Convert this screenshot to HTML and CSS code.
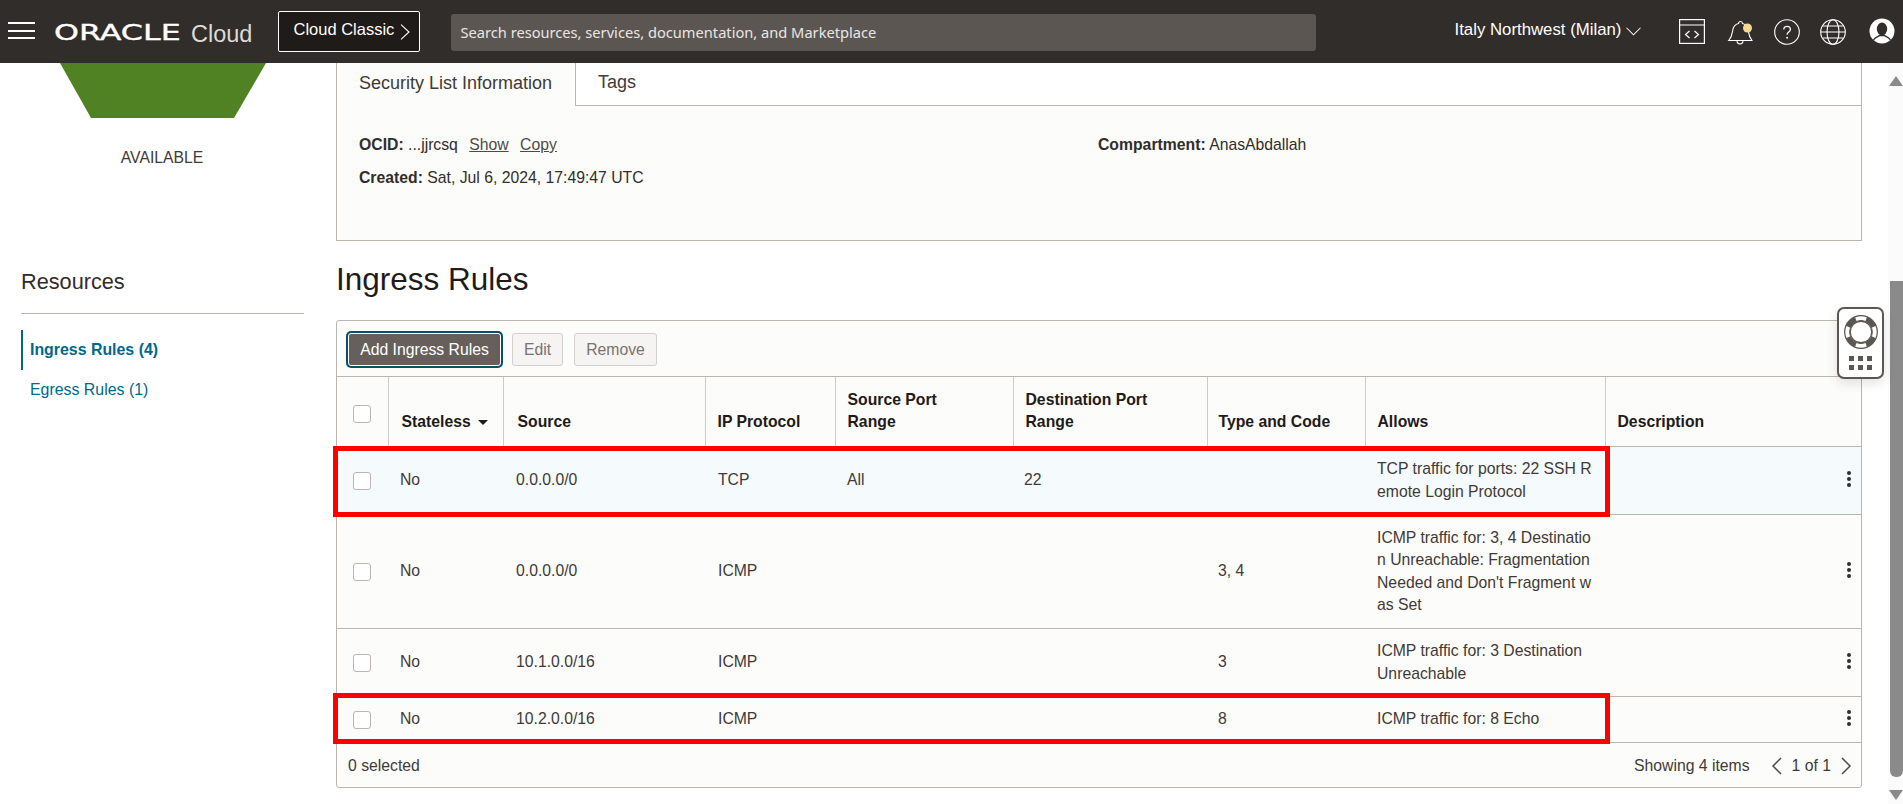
FILE: index.html
```html
<!DOCTYPE html>
<html lang="en">
<head>
<meta charset="utf-8">
<title>Security List - Ingress Rules</title>
<link rel="stylesheet" href="styles.css">
</head>
<body>
<header class="topbar">
  <button class="burger" aria-label="Menu"><span></span><span></span><span></span></button>
  <div class="brand"><span class="brand-oracle">ORACLE</span><span class="brand-cloud">Cloud</span></div>
  <button class="classic"><span class="classic-label">Cloud Classic</span>
    <svg class="classic-chev" viewBox="0 0 10 16" width="10" height="16"><path d="M1 .7l8 7.300-8 7.300" fill="none" stroke="#fff" stroke-width="1.100"/></svg>
  </button>
  <div class="search">Search resources, services, documentation, and Marketplace</div>
  <div class="region">Italy Northwest (Milan)
    <svg viewBox="0 0 16 9" width="15" height="9"><path d="M.5.5L8 8 15.500.5" fill="none" stroke="#fff" stroke-width="1.100"/></svg>
  </div>
  <div class="tools">
    <svg class="tool-code" viewBox="0 0 26 25" width="26" height="25" fill="none" stroke="#fff" stroke-width="1.200"><rect x=".6" y=".6" width="24.800" height="23.800"/><path d="M.6 6h24.800M10.500 12l-4 3.500 4 3.500M15.500 12l4 3.500-4 3.500"/></svg>
    <svg class="tool-bell" viewBox="0 0 26 26" width="26" height="26" fill="none" stroke="#fff" stroke-width="1.100"><path d="M1.700 21.500c3.300-3.800 3.500-6.500 4-10 .5-3.700 2.800-6.300 5.800-7 .1-2.700 3.900-2.700 4 0 2.900.7 5.200 3.300 5.700 7 .5 3.500.8 6.200 3.800 10z"/><path d="M10 21.500c0 4.500 6 4.500 6 0"/><circle cx="20.500" cy="9" r="4.500" fill="#f6d98e" stroke="none"/></svg>
    <svg class="tool-help" viewBox="0 0 26 26" width="26" height="26" fill="none" stroke="#fff" stroke-width="1.100"><circle cx="13" cy="13" r="12.300"/><path d="M9.800 10.500c0-4.300 6.600-4.300 6.600 0 0 2.600-3.300 2.600-3.300 5.200" stroke-width="1.300"/><circle cx="13.100" cy="18.800" r="1" fill="#fff" stroke="none"/></svg>
    <svg class="tool-globe" viewBox="0 0 26 26" width="26" height="26" fill="none" stroke="#fff" stroke-width="1.100"><circle cx="13" cy="13" r="12.300"/><ellipse cx="13" cy="13" rx="6" ry="12.300"/><path d="M.7 13h24.600M2.800 7h20.400M2.800 19h20.400"/></svg>
    <svg class="tool-user" viewBox="0 0 26 26" width="26" height="26"><circle cx="13" cy="13" r="12.500" fill="#fff"/><ellipse cx="13" cy="11" rx="5.200" ry="6.400" fill="#312d2a"/><path d="M4.500 22c2-3.500 5-3.500 6-4.500h5c1 1 4 1 6 4.500" fill="none" stroke="#312d2a" stroke-width="1.400"/></svg>
  </div>
</header>

<main class="page">
  <aside class="side">
    <svg class="sl-shape" viewBox="0 0 206 55" width="206" height="55"><polygon points="0,0 206,0 174,55 31,55" fill="#508223"/></svg>
    <div class="status">AVAILABLE</div>
    <h2 class="res-title">Resources</h2>
    <nav class="res-nav">
      <a class="res-link res-active">Ingress Rules (4)</a>
      <a class="res-link">Egress Rules (1)</a>
    </nav>
  </aside>

  <section class="content">
    <div class="info">
      <div class="tabs">
        <div class="tab tab-on">Security List Information</div>
        <div class="tab tab-off">Tags</div>
        <div class="tab-fill"></div>
      </div>
      <div class="info-body">
        <div class="info-col">
          <p class="info-line"><b>OCID:</b> ...jjrcsq <a class="lnk">Show</a> <a class="lnk">Copy</a></p>
          <p class="info-line"><b>Created:</b> Sat, Jul 6, 2024, 17:49:47 UTC</p>
        </div>
        <div class="info-col">
          <p class="info-line"><b>Compartment:</b> AnasAbdallah</p>
        </div>
      </div>
    </div>

    <h1 class="title">Ingress Rules</h1>

    <div class="card">
      <div class="toolbar">
        <button class="btn btn-primary">Add Ingress Rules</button>
        <button class="btn btn-off">Edit</button>
        <button class="btn btn-off">Remove</button>
      </div>
      <table class="grid">
        <colgroup>
          <col class="c-check"><col class="c-state"><col class="c-src"><col class="c-proto"><col class="c-sport"><col class="c-dport"><col class="c-type"><col class="c-allow"><col class="c-desc">
        </colgroup>
        <thead>
          <tr>
            <th class="th-check"><span class="box box-head"></span></th>
            <th>Stateless <span class="sort"></span></th>
            <th>Source</th>
            <th>IP Protocol</th>
            <th class="th-wrap">Source Port Range</th>
            <th class="th-wrap">Destination Port Range</th>
            <th>Type and Code</th>
            <th>Allows</th>
            <th>Description</th>
          </tr>
        </thead>
        <tbody>
          <tr class="r1 row-hi">
            <td class="td-check"><span class="box"></span></td><td>No</td><td>0.0.0.0/0</td><td>TCP</td><td>All</td><td>22</td><td></td>
            <td class="allows">TCP traffic for ports: 22 SSH Remote Login Protocol</td>
            <td class="kebab-cell"><span class="kebab"><i></i><i></i><i></i></span></td>
          </tr>
          <tr class="r2">
            <td class="td-check"><span class="box"></span></td><td>No</td><td>0.0.0.0/0</td><td>ICMP</td><td></td><td></td><td>3, 4</td>
            <td class="allows">ICMP traffic for: 3, 4 Destination Unreachable: Fragmentation Needed and Don't Fragment was Set</td>
            <td class="kebab-cell"><span class="kebab"><i></i><i></i><i></i></span></td>
          </tr>
          <tr class="r3">
            <td class="td-check"><span class="box"></span></td><td>No</td><td>10.1.0.0/16</td><td>ICMP</td><td></td><td></td><td>3</td>
            <td class="allows">ICMP traffic for: 3 Destination Unreachable</td>
            <td class="kebab-cell"><span class="kebab"><i></i><i></i><i></i></span></td>
          </tr>
          <tr class="r4">
            <td class="td-check"><span class="box"></span></td><td>No</td><td>10.2.0.0/16</td><td>ICMP</td><td></td><td></td><td>8</td>
            <td class="allows">ICMP traffic for: 8 Echo</td>
            <td class="kebab-cell"><span class="kebab"><i></i><i></i><i></i></span></td>
          </tr>
        </tbody>
      </table>
      <div class="foot">
        <span>0 selected</span>
        <div class="pager">
          <span class="pager-count">Showing 4 items</span>
          <svg viewBox="0 0 11 18" width="11" height="18"><path d="M10 1L2 9l8 8" fill="none" stroke="#4f4a46" stroke-width="1.500"/></svg>
          <span>1 of 1</span>
          <svg viewBox="0 0 11 18" width="11" height="18"><path d="M1 1l8 8-8 8" fill="none" stroke="#4f4a46" stroke-width="1.500"/></svg>
        </div>
      </div>
    </div>
  </section>

  <div class="scrollbar">
    <span class="sb-up"></span>
    <span class="sb-thumb"></span>
    <span class="sb-down"></span>
  </div>

  <div class="mark mark-a"></div>
  <div class="mark mark-b"></div>

  <div class="helper">
    <svg viewBox="0 0 36 36" width="34" height="34"><circle cx="18" cy="18" r="14.500" fill="none" stroke="#5b5652" stroke-width="5.500"/><circle cx="18" cy="18" r="17.300" fill="none" stroke="#5b5652" stroke-width="1.200"/><circle cx="18" cy="18" r="11.300" fill="none" stroke="#5b5652" stroke-width="1.200"/><path d="M12.500 4.500a14.500 14.500 0 0 1 11 0M31.500 12.500a14.500 14.500 0 0 1 0 11M23.500 31.500a14.500 14.500 0 0 1-11 0M4.500 23.500a14.500 14.500 0 0 1 0-11" fill="none" stroke-width="4" stroke="#fcfcfb"/></svg>
    <div class="dots"><i></i><i></i><i></i><i></i><i></i><i></i></div>
  </div>
</main>
</body>
</html>
```
FILE: styles.css
```css
* { box-sizing: border-box; }
html, body { margin: 0; height: 804px; overflow: hidden; }
body { background: #fff; color: #312d2a; font-family: "Liberation Sans", Arial, sans-serif; font-size: 15.75px; }

/* top bar */
.topbar { height: 63px; background: #312d2a; color: #fff; display: flex; align-items: center; }
.burger { width: 27px; height: 17px; margin-left: 8px; padding: 0; background: none; border: 0; display: flex; flex-direction: column; justify-content: space-between; margin-top: -2px; }
.burger span { display: block; height: 2px; background: #fff; }
.brand { display: flex; align-items: center; margin-left: 19px; width: 223.500px; }
.brand-oracle { display: block; flex: none; width: 137px; font-family: "DejaVu Sans", sans-serif; font-size: 21px; font-weight: 400; -webkit-text-stroke: .35px #fff; transform: scaleX(1.510); transform-origin: left center; margin-top: 3px; }
.brand-cloud { font-family: "Liberation Sans", sans-serif; font-size: 23.500px; color: #dedbd8; margin-top: 5px; }
.classic { height: 41px; width: 142px; margin-top: -1px; background: #1f1b18; color: #fff; border: 1px solid #fff; border-radius: 2px; padding: 0 0 0 15px; display: flex; align-items: center; gap: 6px; font: 16.5px "Liberation Sans", sans-serif; }
.classic-label { margin-top: -3px; }
.classic-chev { margin-top: 1px; }
.search { width: 865px; height: 37px; margin-left: 31px; margin-top: 1px; background: #5c5652; border-radius: 3px; padding-left: 10px; display: flex; align-items: center; color: #e8e6e4; font: 14.650px "Noto Sans", sans-serif; }
.region { margin-left: 139px; display: flex; align-items: center; gap: 5px; font-size: 16.800px; margin-top: -4px; }
.region svg { margin-top: 4px; }
.tools { margin-left: auto; padding-right: 8px; display: flex; align-items: center; }
.tools svg { display: block; flex: none; }
.tool-bell { margin-left: 22px; }
.tool-help { margin-left: 21px; }
.tool-globe { margin-left: 20px; }
.tool-user { margin-left: 23px; margin-top: -1px; }

/* page */
.page { position: relative; display: flex; height: 741px; }
.side { width: 336px; flex: none; padding-left: 21px; }
.sl-shape { display: block; margin-left: 39px; }
.status { width: 282px; text-align: center; margin-top: 31px; height: 18px; line-height: 18px; font-size: 15.75px; color: #3f3a36; }
.res-title { margin: 102px 0 0; padding-bottom: 18px; width: 283px; border-bottom: 1px solid #bcb6b1; font-size: 21.700px; font-weight: 400; line-height: 26px; }
.res-nav { margin-top: 16px; display: flex; flex-direction: column; gap: 0; }
.res-link { display: block; height: 40px; line-height: 40px; padding-left: 7px; color: #00688c; font-size: 15.900px; border-left: 2px solid transparent; }
.res-active { font-weight: 700; border-left-color: #00688c; }

.content { width: 1552px; flex: none; padding-right: 26px; }
.info { height: 178px; border: 1px solid #bcb6b1; border-top: 0; background: #fcfcfb; }
.tabs { display: flex; height: 43px; }
.tab { display: flex; align-items: center; font-size: 18px; color: #3f3a36; height: 43px; padding-bottom: 3px; }
.tab-on { width: 239px; padding-left: 22px; border-right: 1px solid #bcb6b1; }
.tab-off { width: 62px; padding-left: 22px; background: #fff; border-bottom: 1px solid #bcb6b1; flex: none; }
.tab-fill { flex: 1; background: #fff; border-bottom: 1px solid #bcb6b1; }
.info-body { display: flex; padding: 28px 22px 0; }
.info-col { width: 739px; }
.info-line { margin: 0 0 10.500px; line-height: 22.400px; }
.info-line b { color: #312d2a; }
.lnk { text-decoration: underline; margin-left: 7px; color: #4f4a46; }

.title { margin: 0; height: 79px; padding-top: 19px; font-size: 31.500px; line-height: 38px; font-weight: 400; color: #1f1b18; }

.card { height: 468px; border: 1px solid #bcb6b1; border-radius: 3px; background: #fcfcfb; display: flex; flex-direction: column; }
.toolbar { height: 56px; flex: none; display: flex; align-items: center; gap: 9px; padding: 2px 0 0 10px; border-bottom: 1px solid #bcb6b1; }
.btn { height: 33px; padding: 0 11px; border-radius: 3px; font: 15.75px "Liberation Sans", sans-serif; }
.btn-primary { width: 153px; margin: 0 2px 0 1px; padding: 0; background: #665f5b; color: #fff; border: 1px solid #fff; box-shadow: 0 0 0 2px #04536a; }
.btn-off { background: #f5f4f2; border: 1px solid #d3cfcb; color: #7a736e; margin-right: 2px; }

.grid { width: 100%; table-layout: fixed; border-collapse: collapse; flex: none; }
.c-check { width: 51px; }
.c-state { width: 115px; }
.c-src { width: 202px; }
.c-proto { width: 130px; }
.c-sport { width: 178px; }
.c-dport { width: 194px; }
.c-type { width: 158px; }
.c-allow { width: 240px; }
.grid th { height: 69px; padding: 0 12px 12px; text-align: left; vertical-align: bottom; font-size: 15.75px; line-height: 22.400px; color: #1f1b18; border-left: 1px solid #cfcbc7; border-bottom: 1px solid #bcb6b1; }
.grid th:first-child { border-left: 0; }
.grid th.th-wrap { padding-right: 50px; }
.grid th:nth-child(2) { padding-left: 13px; }
.grid th:nth-child(3) { padding-left: 14px; }
.grid th:nth-child(7) { padding-left: 11px; }
.grid td { padding: 1px 12px 0; vertical-align: middle; font-size: 15.75px; line-height: 22.400px; color: #3f3a36; border-bottom: 1px solid #bcb6b1; }
.grid td:nth-child(3) { padding-left: 13px; }
.grid td:nth-child(4) { padding-left: 13px; }
.grid td:nth-child(6) { padding-left: 11px; }
.grid td:nth-child(7) { padding-left: 11px; }
.grid th.th-check { padding: 0 0 23px 11px; }
.grid td.td-check { padding: 0 0 2px 11px; }
.r1 td { height: 68px; }
.r2 td { height: 114px; }
.r3 td { height: 68px; }
.r4 td { height: 46px; }
.row-hi td { background: #f5fafd; }
.allows { word-break: break-all; }
.box { display: block; width: 18px; height: 18px; margin: 3px 0 0 5px; background: #fff; border: 1px solid #bcb6b1; border-radius: 3px; }
.box-head { margin: 0 0 0 5px; }
.sort { display: inline-block; width: 0; height: 0; margin: 0 0 2px 3px; border: 5px solid transparent; border-top: 5px solid #1f1b18; border-bottom: 0; }
.grid td.kebab-cell { text-align: right; padding: 0 10px 3px 0; }
.kebab { display: inline-flex; flex-direction: column; gap: 2.300px; vertical-align: middle; }
.kebab i { display: block; width: 4px; height: 4px; border-radius: 50%; background: #312d2a; }

.foot { flex: 1; display: flex; justify-content: space-between; align-items: center; padding: 2px 9px 0 11px; font-size: 15.75px; color: #3f3a36; }
.pager { display: flex; align-items: center; gap: 10px; }
.pager-count { margin-right: 11px; }

/* fake browser scrollbar */
.scrollbar { width: 15px; flex: none; background: #fbfbfb; position: relative; display: flex; flex-direction: column; align-items: center; }
.sb-up { width: 0; height: 0; margin-top: 13px; border: 7.500px solid transparent; border-top: 0; border-bottom: 10px solid #8a8a8a; }
.sb-thumb { width: 13px; height: 496px; margin: 195px 0 0 2px; background: #8a8a8a; border-radius: 0 0 6px 6px; }
.sb-down { width: 0; height: 0; margin-top: 13px; border: 7.500px solid transparent; border-bottom: 0; border-top: 10px solid #8a8a8a; }

/* annotation boxes drawn over the table */
.mark { position: absolute; left: 333px; width: 1277px; border: 5px solid #f00; pointer-events: none; }
.mark-a { top: 383px; height: 71px; }
.mark-b { top: 630px; height: 51px; }

.helper { position: absolute; left: 1837px; top: 244px; width: 47px; height: 72px; background: #fff; border: 2px solid #5b5652; border-radius: 7px; box-shadow: 0 4px 12px rgba(0,0,0,.12); display: flex; flex-direction: column; align-items: center; padding-top: 6px; }
.helper svg { display: block; }
.dots { display: grid; grid-template-columns: repeat(3, 5px); gap: 4px; margin-top: 7px; }
.dots i { display: block; width: 5px; height: 5px; background: #5b5652; }
```
